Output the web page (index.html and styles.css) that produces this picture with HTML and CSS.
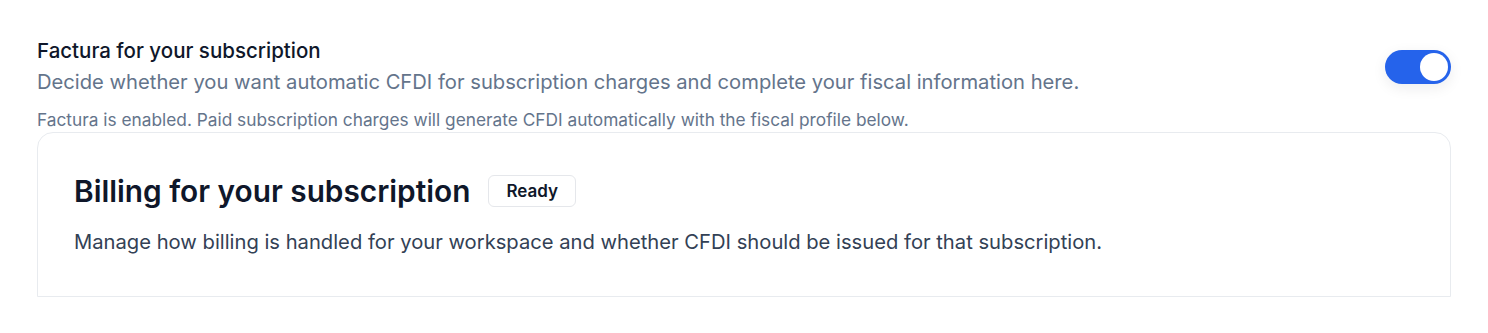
FILE: index.html
```html
<!DOCTYPE html>
<html lang="en">
<head>
    <meta charset="UTF-8">
    <meta name="viewport" content="width=device-width, initial-scale=1.0">
    <title>Subscription billing</title>
    <link rel="stylesheet" href="styles.css">
</head>
<body>
    <main class="page">
        <div class="setting-row">
            <div class="setting-text">
                <h3 class="setting-title">Factura for your subscription</h3>
                <p class="setting-desc">Decide whether you want automatic CFDI for subscription charges and complete your fiscal information here.</p>
            </div>
            <button class="toggle on" type="button" aria-pressed="true"><span class="knob"></span></button>
        </div>
        <p class="setting-note">Factura is enabled. Paid subscription charges will generate CFDI automatically with the fiscal profile below.</p>

        <section class="card">
            <div class="card-head">
                <h2>Billing for your subscription</h2>
                <span class="badge">Ready</span>
            </div>
            <p class="card-desc">Manage how billing is handled for your workspace and whether CFDI should be issued for that subscription.</p>
        </section>
    </main>
</body>
</html>
```

FILE: styles.css
```css
body {
    font-family: Inter, "Noto Sans", sans-serif;
    margin: 0;
    padding: 0;
    background-color: #ffffff;
    color: #0f172a;
}
.page {
    padding: 37px 37px 0 37px;
}
.setting-row {
    display: flex;
    justify-content: space-between;
    align-items: center;
}
.setting-title {
    margin: 0;
    font-size: 20.5px;
    line-height: 28px;
    font-weight: 500;
    color: #0f172a;
}
.setting-desc {
    margin: 3px 0 0;
    font-size: 20.2px;
    line-height: 28px;
    color: #64748b;
}
.toggle {
    width: 66px;
    height: 34px;
    border: none;
    border-radius: 17px;
    padding: 3px;
    background-color: #2563eb;
    display: flex;
    justify-content: flex-end;
    box-shadow: 0 4px 14px rgba(15, 23, 42, 0.08);
    cursor: pointer;
}
.knob {
    width: 28px;
    height: 28px;
    border-radius: 50%;
    background-color: #ffffff;
}
.setting-note {
    margin: 13px 0 0;
    font-size: 17.3px;
    line-height: 22px;
    color: #64748b;
}
.card {
    margin-top: 1px;
    height: 165px;
    border: 1px solid #e8ebef;
    border-radius: 16px 16px 0 0;
    padding: 38px 36px 0;
    box-sizing: border-box;
}
.card-head {
    display: flex;
    align-items: center;
    gap: 18px;
}
.card-head h2 {
    margin: 0;
    font-size: 29.8px;
    line-height: 40px;
    font-weight: 600;
    color: #0f172a;
}
.badge {
    border: 1px solid #e5e7eb;
    border-radius: 6px;
    padding: 5px 17px;
    font-size: 17px;
    line-height: 20px;
    font-weight: 600;
    color: #0f172a;
}
.card-desc {
    margin: 17px 0 0;
    font-size: 20.2px;
    line-height: 28px;
    color: #334155;
}
```
